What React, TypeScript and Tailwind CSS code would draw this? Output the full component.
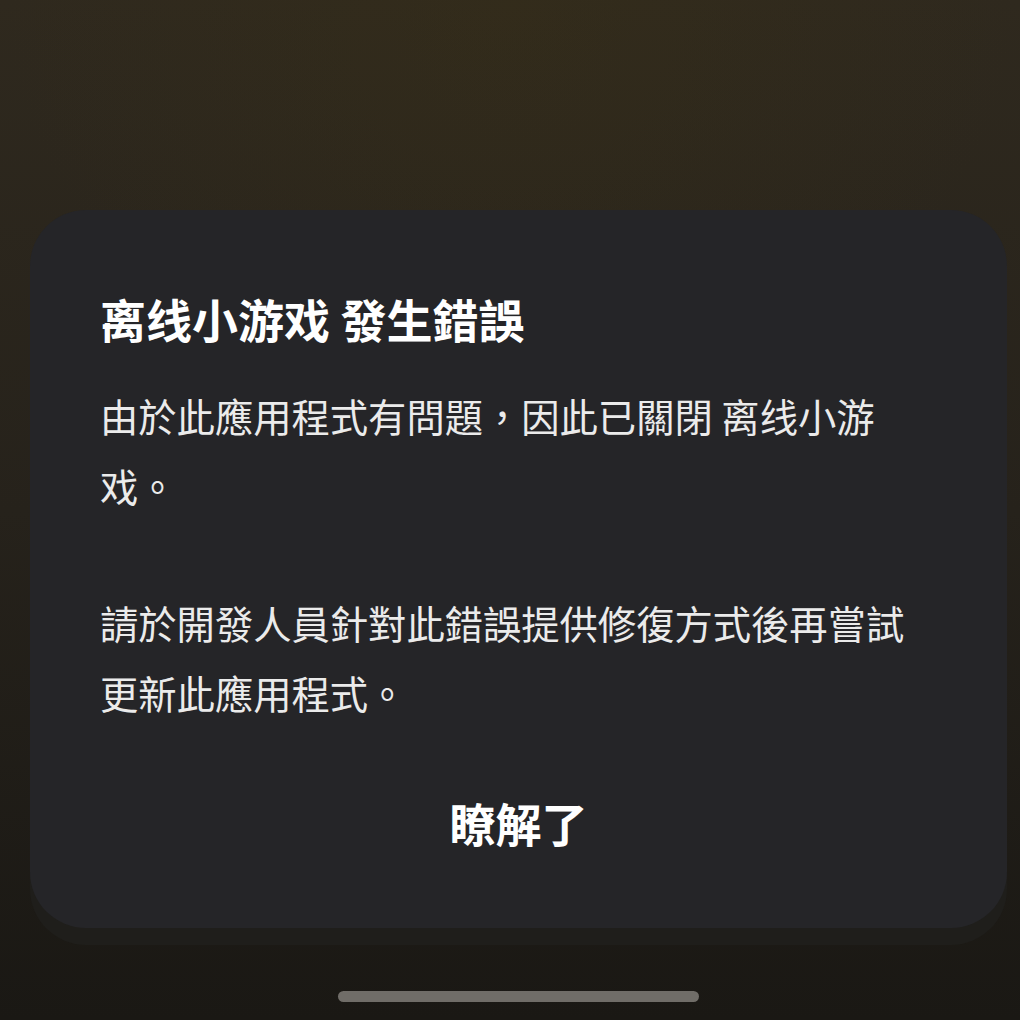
export default function App() {
  return (
    <div className="relative flex h-[1020px] w-[1020px] flex-col overflow-hidden bg-linear-to-b from-[#2f291e] via-[#26221b] to-[#1a1814] pl-[30px] pr-[13px] pt-[210px] font-['Noto_Sans_CJK_TC','Noto_Sans_CJK_SC',sans-serif]">
      {/* warm glow at the top */}
      <div className="pointer-events-none absolute inset-x-0 top-0 h-[420px] bg-[radial-gradient(ellipse_at_50%_0%,rgba(60,50,20,0.3),transparent_70%)]" />

      {/* Dialog */}
      <div className="relative flex flex-col rounded-[56px] bg-[#252528] px-[70px] pb-[66px] pt-[79px] shadow-[0_17px_0_#1f1e1b]">
        <h1 className="text-[46px] font-bold leading-[58px] text-white">离线小游戏 發生錯誤</h1>

        <p className="mt-[34px] whitespace-nowrap text-[38.3px] leading-[70px] text-[#ebebeb]">
          由於此應用程式有問題，因此已關閉 离线小游
          <br />
          戏。
        </p>

        <p className="mt-[67px] whitespace-nowrap text-[38.3px] leading-[70px] text-[#ebebeb]">
          請於開發人員針對此錯誤提供修復方式後再嘗試
          <br />
          更新此應用程式。
        </p>

        <button className="mt-[54px] self-center text-[46px] font-bold leading-[80px] text-white">瞭解了</button>
      </div>

      {/* Home indicator */}
      <div className="relative mt-[63px] h-[11px] w-[361px] self-center rounded-full bg-[#706d68]" />
    </div>
  )
}
